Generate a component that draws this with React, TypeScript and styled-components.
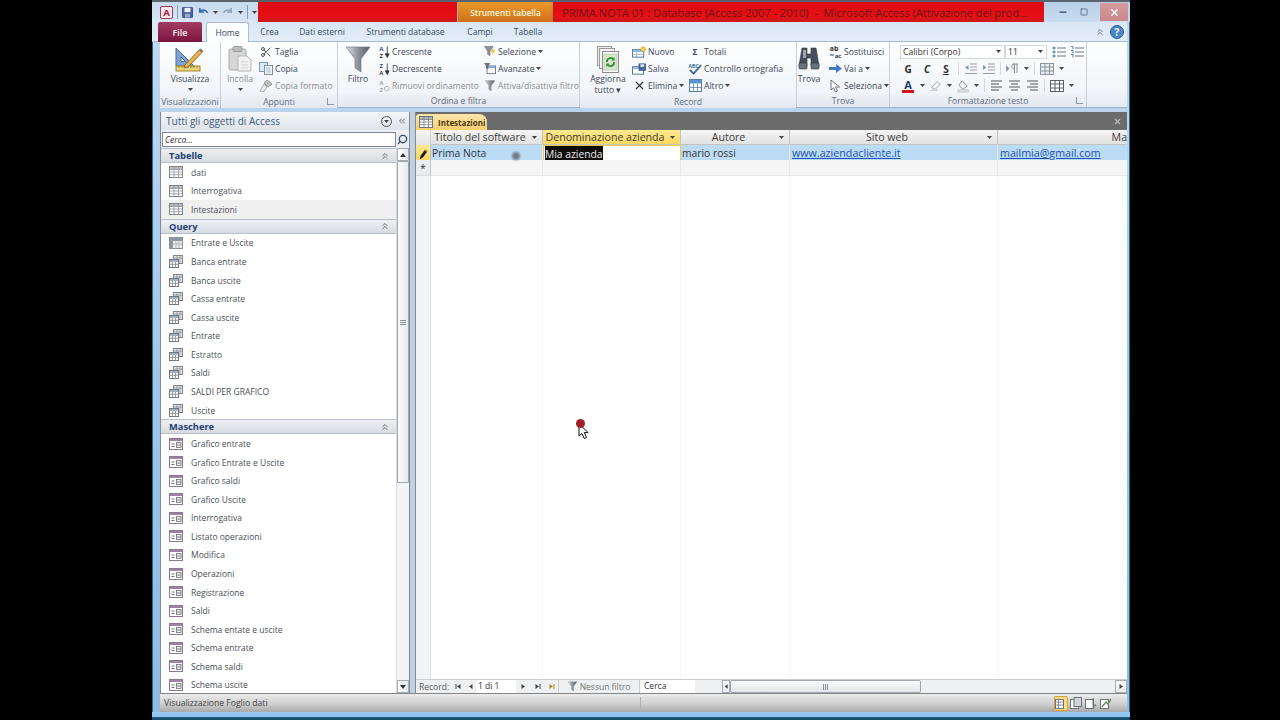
import React from 'react';
import styled, { createGlobalStyle } from 'styled-components';
import { Scissors, X, ChevronsUp, ChevronsLeft, Search, Minus, Square } from 'lucide-react';

const UI_FONT = '"Open Sans", "Noto Sans", "Liberation Sans", sans-serif';

const GlobalStyle = createGlobalStyle`
    html, body {
        margin: 0;
        height: 100%;
        background: #000;
        overflow: hidden;
    }
    * {
        box-sizing: border-box;
    }
`;

const TABLES = ['dati', 'Interrogativa', 'Intestazioni'];
const QUERIES = [
    'Entrate e Uscite',
    'Banca entrate',
    'Banca uscite',
    'Cassa entrate',
    'Cassa uscite',
    'Entrate',
    'Estratto',
    'Saldi',
    'SALDI PER GRAFICO',
    'Uscite',
];
const FORMS = [
    'Grafico entrate',
    'Grafico Entrate e Uscite',
    'Grafico saldi',
    'Grafico Uscite',
    'Interrogativa',
    'Listato operazioni',
    'Modifica',
    'Operazioni',
    'Registrazione',
    'Saldi',
    'Schema entate e uscite',
    'Schema entrate',
    'Schema saldi',
    'Schema uscite',
];
const COLUMNS = '15px 112px 138px 109px 208px 262px';

/* icons */
const TableIcon = () => (
    <svg width="14" height="12" viewBox="0 0 14 12">
        <rect x="0.5" y="0.5" width="13" height="11" fill="#fff" stroke="#6f7378" />
        <rect x="1" y="1" width="12" height="2.5" fill="#aeb4bc" />
        <path d="M0.5 3.5H13.5M0.5 6H13.5M0.5 8.7H13.5M5 1V11M9.5 1V11" stroke="#7d8288" strokeWidth="0.8" />
    </svg>
);
const QueryIcon = () => (
    <svg width="14" height="13" viewBox="0 0 14 13">
        <rect x="4.5" y="0.5" width="9" height="8" fill="#dfe3e8" stroke="#6b7077" />
        <path d="M4.5 3H13.5M8 1V8M11 1V8" stroke="#6b7077" strokeWidth="0.7" />
        <rect x="0.5" y="4.5" width="9" height="8" fill="#fff" stroke="#5b6066" />
        <rect x="1" y="5" width="8" height="2" fill="#8fa6b8" />
        <path d="M0.5 9.3H9.5M3.5 7V12.5M6.5 7V12.5" stroke="#5b6066" strokeWidth="0.7" />
    </svg>
);
const CrossIcon = () => (
    <svg width="14" height="12" viewBox="0 0 14 12">
        <rect x="0.5" y="0.5" width="13" height="11" fill="#e6e8ec" stroke="#777c83" />
        <rect x="1" y="1" width="12" height="3" fill="#7d858f" />
        <rect x="1" y="1" width="3" height="10" fill="#7d858f" />
        <path d="M7 4V11M10 4V11M4 7H13" stroke="#9a9fa6" strokeWidth="0.8" />
    </svg>
);
const FormIcon = () => (
    <svg width="14" height="12" viewBox="0 0 14 12">
        <rect x="0.5" y="0.5" width="13" height="11" fill="#fff" stroke="#7a5f80" />
        <rect x="1" y="1" width="12" height="2" fill="#8f6f97" />
        <path d="M2.5 6H5.5M2.5 8.5H5.5" stroke="#57585c" />
        <rect x="7.5" y="4.5" width="4.5" height="5" fill="#e7e7ea" stroke="#57585c" strokeWidth="0.8" />
        <path d="M7.5 7H12" stroke="#57585c" strokeWidth="0.8" />
    </svg>
);
const AccessLogo = () => (
    <svg width="13" height="13" viewBox="0 0 15 15">
        <rect x="0.5" y="0.5" width="14" height="14" rx="2" fill="#f7e6ea" stroke="#8c1538" />
        <text x="7.5" y="12" textAnchor="middle" fontSize="11" fontWeight="700" fontFamily={UI_FONT} fill="#a01a42">
            A
        </text>
    </svg>
);
const SaveIcon = () => (
    <svg width="11" height="11" viewBox="0 0 13 13">
        <rect x="0.5" y="0.5" width="12" height="12" rx="1" fill="#4a66a0" stroke="#2f4575" />
        <rect x="3" y="1" width="7" height="5" fill="#eef3fa" />
        <rect x="3.5" y="8" width="6" height="4.5" fill="#9aa9c4" />
    </svg>
);
const UndoIcon = ({ $muted }: { $muted?: boolean }) => (
    <svg width="12" height="10" viewBox="0 0 13 11" style={$muted ? { transform: 'scaleX(-1)' } : undefined}>
        <path
            d="M3 1V5.5H7.5M3.2 5.2C5 2.6 9.5 2.5 11.5 6.5"
            fill="none"
            stroke={$muted ? '#8fa3b6' : '#2f64a8'}
            strokeWidth="1.7"
        />
    </svg>
);
const Caret = () => (
    <svg width="5" height="3" viewBox="0 0 5 3">
        <path d="M0 0H5L2.5 3Z" fill="#444" />
    </svg>
);
const VisualizzaIcon = () => (
    <svg width="32" height="26" viewBox="0 0 32 26">
        <path d="M2 2L2 20H20Z" fill="#7fa3cf" stroke="#4a6a96" />
        <path d="M7 11L7 15.5H11.5Z" fill="#fff" stroke="#4a6a96" />
        <rect x="2" y="20" width="24" height="5" fill="#ecd277" stroke="#a28a35" />
        <path d="M5 20V22M8 20V22M11 20V22M14 20V22M17 20V22M20 20V22M23 20V22" stroke="#7f6a22" strokeWidth="0.7" />
        <path d="M11 19L25 4L28 6.5L14 21L10 22Z" fill="#e9b44f" stroke="#7f5f1d" strokeWidth="0.8" />
        <path d="M25 4L26.5 2.5L29.5 5L28 6.5Z" fill="#7a7a7a" />
    </svg>
);
const PasteIcon = () => (
    <svg width="24" height="26" viewBox="0 0 24 26">
        <rect x="1" y="3" width="17" height="21" rx="1.5" fill="#d6d6d6" stroke="#a9a9a9" />
        <rect x="5" y="0.5" width="9" height="5" rx="1" fill="#bfbfbf" stroke="#9c9c9c" />
        <path d="M10 10H19L23 14V25H10Z" fill="#f2f2f2" stroke="#b5b5b5" />
        <path d="M12.5 16H20M12.5 19H20M12.5 22H20" stroke="#d0d0d0" />
    </svg>
);
const CopyIcon = () => (
    <svg width="14" height="13" viewBox="0 0 14 13">
        <rect x="0.5" y="0.5" width="8" height="9" fill="#dce8f5" stroke="#7d99b8" />
        <rect x="5.5" y="3.5" width="8" height="9" fill="#fff" stroke="#7d8fa5" />
        <path d="M7 6H12M7 8H12M7 10H12" stroke="#7fa0c2" strokeWidth="0.8" />
    </svg>
);
const BrushIcon = () => (
    <svg width="14" height="13" viewBox="0 0 14 13">
        <path d="M8 1L13 5L9 8L5 4Z" fill="#c3c3c3" stroke="#8a8a8a" strokeWidth="0.8" />
        <path d="M5 5L8 8L5 12.5L1 12Z" fill="#ececec" stroke="#999" strokeWidth="0.8" />
    </svg>
);
const FunnelIcon = ({ $size = 24 }: { $size?: number }) => (
    <svg width={$size} height={$size + 4} viewBox="0 0 24 28">
        <defs>
            <linearGradient id="fn" x1="0" x2="1" y1="0" y2="0">
                <stop offset="0" stopColor="#dfe2e6" />
                <stop offset="0.5" stopColor="#8d949c" />
                <stop offset="1" stopColor="#596069" />
            </linearGradient>
        </defs>
        <path d="M0 1H24L15 13V26L9 22V13Z" fill="url(#fn)" stroke="#6b7178" strokeWidth="0.6" />
    </svg>
);
const SortIcon = ({ $top, $bottom, $muted }: { $top: string; $bottom: string; $muted?: boolean }) => (
    <svg width="13" height="14" viewBox="0 0 13 14">
        <text x="3.5" y="6" textAnchor="middle" fontSize="6.5" fontWeight="700" fontFamily={UI_FONT} fill={$muted ? '#a5a5a5' : '#2f4f78'}>
            {$top}
        </text>
        <text x="3.5" y="13" textAnchor="middle" fontSize="6.5" fontWeight="700" fontFamily={UI_FONT} fill={$muted ? '#a5a5a5' : '#444'}>
            {$bottom}
        </text>
        {$muted ? (
            <path d="M7 9C9 6 12 8 12 10C12 12 9 13 7 11Z" fill="none" stroke="#a5a5a5" />
        ) : (
            <path d="M10 1V11M8 9L10 13L12 9Z" fill="#333" stroke="#333" strokeWidth="0.9" />
        )}
    </svg>
);
const SelectionIcon = () => (
    <svg width="13" height="13" viewBox="0 0 13 13">
        <path d="M0.5 1H10L6.5 6V11L4 9.5V6Z" fill="#8b9198" stroke="#5f656c" strokeWidth="0.6" />
        <path d="M9 3L12 6L8 12L10 7.5L7.5 7Z" fill="#f0c33c" />
    </svg>
);
const AdvancedIcon = () => (
    <svg width="14" height="13" viewBox="0 0 14 13">
        <rect x="3.5" y="3.5" width="10" height="9" fill="#fff" stroke="#63708a" />
        <rect x="4" y="4" width="9" height="2" fill="#7fa5d4" />
        <path d="M0.5 0.5H7L4.7 3.5V7L2.8 6V3.5Z" fill="#6c7279" stroke="#4f555c" strokeWidth="0.5" />
    </svg>
);
const RefreshIcon = () => (
    <svg width="24" height="27" viewBox="0 0 24 27">
        <rect x="1.5" y="0.5" width="14" height="19" fill="#eee" stroke="#9a9a9a" />
        <rect x="3.5" y="2.5" width="15" height="20" fill="#f5f5f5" stroke="#9a9a9a" />
        <rect x="6.5" y="5.5" width="16" height="21" fill="#fff" stroke="#8a8a8a" />
        <rect x="8" y="8" width="13" height="16" fill="#d5e7cb" stroke="#a9bd9c" strokeWidth="0.6" />
        <path d="M11 16A3.6 3.6 0 0 1 17.5 13.5M18 16A3.6 3.6 0 0 1 11.5 18.6" fill="none" stroke="#2f8a2f" strokeWidth="1.7" />
        <path d="M18.6 11V14.5H15.4ZM10.4 21V17.6H13.6Z" fill="#2f8a2f" />
    </svg>
);
const NewIcon = () => (
    <svg width="15" height="12" viewBox="0 0 15 12">
        <rect x="0.5" y="3.5" width="12" height="8" fill="#fff" stroke="#53729c" />
        <rect x="1" y="4" width="11" height="2" fill="#8fb3dd" />
        <path d="M0.5 8.5H12.5M5 6V11.5" stroke="#7c98bb" strokeWidth="0.7" />
        <circle cx="12" cy="3" r="2.6" fill="#f6d45a" stroke="#b4922a" strokeWidth="0.6" />
    </svg>
);
const SaveRowIcon = () => (
    <svg width="15" height="12" viewBox="0 0 15 12">
        <rect x="0.5" y="3.5" width="12" height="8" fill="#fff" stroke="#53729c" />
        <rect x="1" y="4" width="11" height="2" fill="#8fb3dd" />
        <rect x="7.5" y="0.5" width="7" height="7" fill="#4668a5" stroke="#2e4676" strokeWidth="0.7" />
        <rect x="9" y="1" width="4" height="2.6" fill="#e9eff8" />
    </svg>
);
const SpellIcon = () => (
    <svg width="15" height="13" viewBox="0 0 15 13">
        <text x="6" y="5.5" textAnchor="middle" fontSize="5.5" fontWeight="700" fontFamily={UI_FONT} fill="#3a6aa5">
            ABC
        </text>
        <path d="M2 8L6 12L14 3" fill="none" stroke="#3f6a9a" strokeWidth="2" />
    </svg>
);
const MoreIcon = () => (
    <svg width="13" height="13" viewBox="0 0 13 13">
        <rect x="0.5" y="0.5" width="12" height="12" fill="#fff" stroke="#5a7da8" />
        <rect x="1" y="1" width="11" height="3.5" fill="#5c93d3" />
        <path d="M0.5 8.5H12.5M4.5 4.5V12.5M8.5 4.5V12.5" stroke="#5a7da8" strokeWidth="0.8" />
    </svg>
);
const BinocularsIcon = () => (
    <svg width="22" height="24" viewBox="0 0 22 24">
        <path d="M4 2H9V8H13V2H18L21 20H13V12H9V20H1Z" fill="#45505c" stroke="#2b333c" strokeWidth="0.6" />
        <rect x="1" y="17" width="8" height="6" rx="1" fill="#67727e" stroke="#2b333c" strokeWidth="0.6" />
        <rect x="13" y="17" width="8" height="6" rx="1" fill="#67727e" stroke="#2b333c" strokeWidth="0.6" />
        <rect x="5" y="4" width="3" height="8" fill="#9ba6b1" />
    </svg>
);
const ReplaceIcon = () => (
    <svg width="13" height="14" viewBox="0 0 13 14">
        <text x="5" y="6" textAnchor="middle" fontSize="7" fontFamily={UI_FONT} fontWeight="700" fill="#333">
            ab
        </text>
        <text x="9" y="13" textAnchor="middle" fontSize="6" fontFamily={UI_FONT} fontWeight="700" fill="#333">
            ac
        </text>
        <path d="M1 10H5" stroke="#3f72b5" strokeWidth="1.3" />
    </svg>
);
const GotoIcon = () => (
    <svg width="13" height="9" viewBox="0 0 13 9">
        <path d="M0 3H7V0L13 4.5L7 9V6H0Z" fill="#3f7cc8" />
    </svg>
);
const PointerIcon = () => (
    <svg width="11" height="14" viewBox="0 0 11 14">
        <path d="M1 1V11L3.6 8.8L5.5 13L7.5 12L5.6 8H9.5Z" fill="#fff" stroke="#6c7078" />
    </svg>
);
const HelpIcon = () => (
    <svg width="14" height="14" viewBox="0 0 14 14">
        <circle cx="7" cy="7" r="6.5" fill="#4a86c8" stroke="#2f5f97" />
        <text x="7" y="10.7" textAnchor="middle" fontSize="10" fontWeight="700" fontFamily={UI_FONT} fill="#fff">
            ?
        </text>
    </svg>
);
const ListIcon = ({ $numbered }: { $numbered?: boolean }) => (
    <svg width="14" height="12" viewBox="0 0 14 12">
        <path d="M5 2H14M5 6H14M5 10H14" stroke="#6f7780" />
        <path
            d={$numbered ? 'M1 0.5H3V3.5M1 4.5H3V7.5M1 8.5H3V11.5' : 'M1 1.2H3V2.8H1ZM1 5.2H3V6.8H1ZM1 9.2H3V10.8H1Z'}
            fill="none"
            stroke="#5880ad"
        />
    </svg>
);
const IndentIcon = ({ $out }: { $out?: boolean }) => (
    <svg width="13" height="12" viewBox="0 0 13 12">
        <path d="M6 1H13M6 4H13M6 7H13M1 10.5H13" stroke="#9aa0a7" />
        <path d={$out ? 'M4.5 2V7L1 4.5Z' : 'M1 2V7L4.5 4.5Z'} fill="#7f9ab8" />
    </svg>
);
const RtlIcon = () => (
    <svg width="13" height="11" viewBox="0 0 13 11">
        <path d="M0 2V9L3.5 5.5Z" fill="#7f9ab8" />
        <path d="M7 1H12M8 1C5 1 5 6 8 6M8.5 1V10M11 1V10" fill="none" stroke="#8a8f95" />
    </svg>
);
const GridIcon = ({ $light }: { $light?: boolean }) => (
    <svg width="14" height="12" viewBox="0 0 14 12">
        <rect x="0.5" y="0.5" width="13" height="11" fill={$light ? '#e8edf3' : '#fff'} stroke={$light ? '#8c96a1' : '#5c6268'} />
        <path d="M0.5 4H13.5M0.5 8H13.5M5 0.5V11.5M9.5 0.5V11.5" stroke={$light ? '#8c96a1' : '#5c6268'} />
    </svg>
);
const FontColorIcon = () => (
    <svg width="14" height="14" viewBox="0 0 14 14">
        <text x="7" y="10" textAnchor="middle" fontSize="11" fontWeight="700" fontFamily={UI_FONT} fill="#1c3f70">
            A
        </text>
        <rect x="1" y="11" width="12" height="3" fill="#d01818" />
    </svg>
);
const HighlightIcon = () => (
    <svg width="12" height="13" viewBox="0 0 14 13">
        <path d="M2 9L8 2L12 5L6 11Z" fill="none" stroke="#9aa1a9" />
        <path d="M1 12H9" stroke="#c4c8cc" strokeWidth="1.5" />
    </svg>
);
const FillIcon = () => (
    <svg width="12" height="14" viewBox="0 0 14 14">
        <path d="M6 1L12 7L7 11L2 6Z" fill="#f1f1f1" stroke="#7a8088" />
        <rect x="1" y="11.5" width="12" height="2.5" fill="#e2e2e2" stroke="#9a9a9a" strokeWidth="0.5" />
    </svg>
);
const AlignIcon = ({ $mode }: { $mode: 'left' | 'center' | 'right' }) => (
    <svg width="13" height="11" viewBox="0 0 13 11">
        {$mode === 'left' && <path d="M1 1H12M1 4H9M1 7H12M1 10H9" stroke="#555" />}
        {$mode === 'center' && <path d="M1 1H12M3 4H10M1 7H12M3 10H10" stroke="#555" />}
        {$mode === 'right' && <path d="M1 1H12M4 4H12M1 7H12M4 10H12" stroke="#555" />}
    </svg>
);
const ArrowGlyph = ({ $dir, $bar, $color = '#444' }: { $dir: 'left' | 'right'; $bar?: boolean; $color?: string }) => (
    <svg width="7" height="7" viewBox="0 0 7 7">
        <path d={$dir === 'left' ? 'M5.5 1V6L2 3.5Z' : 'M1.5 1V6L5 3.5Z'} fill={$color} />
        {$bar && <path d={$dir === 'left' ? 'M1 1V6' : 'M6 1V6'} stroke={$color} />}
    </svg>
);
const ViewIcon = ({ $kind }: { $kind: number }) => (
    <svg width="12" height="12" viewBox="0 0 12 12">
        <rect x="0.5" y="2.5" width="8" height="9" fill="#fff" stroke="#6d7278" />
        {$kind === 0 && <path d="M0.5 5H8.5M0.5 8H8.5M3.5 2.5V11.5" stroke="#6d7278" strokeWidth="0.8" />}
        {$kind === 1 && <rect x="4" y="0.5" width="7.5" height="9" fill="#cfd4da" stroke="#6d7278" />}
        {$kind === 2 && <path d="M8 1V8H11L8 11Z" fill="#7a8aa0" stroke="#6d7278" strokeWidth="0.7" />}
        {$kind === 3 && <path d="M2 10L6 5L8 7L11 2" fill="none" stroke="#6a8a6a" strokeWidth="1.4" />}
    </svg>
);
const PencilIcon = () => (
    <svg width="9" height="11" viewBox="0 0 9 11">
        <path d="M1 10L2 6.5L6 1L8 2.5L4 8Z" fill="#1a1a1a" stroke="#222" strokeWidth="0.5" />
        <path d="M6 1L8 2.5" stroke="#c98c1a" strokeWidth="1.2" />
    </svg>
);
const MouseCursor = () => (
    <svg width="12" height="17" viewBox="0 0 12 17">
        <path d="M1 1V13L4 10.5L6.2 15.5L8.5 14.5L6.3 9.6H10.2Z" fill="#fff" stroke="#111" />
    </svg>
);

/* page */
const Page = styled.div`
    width: 1280px;
    height: 720px;
    padding-left: 152px;
    background: #000;
    font-family: ${UI_FONT};
    position: relative;
`;

const Window = styled.div`
    width: 978px;
    height: 720px;
    display: flex;
    flex-direction: column;
    background: linear-gradient(#c4d9ee, #9cc4e8 60%, #8fbbe4);
    box-shadow: inset 1px 0 #2a6a8c, inset -1px 0 #2a6a8c;
`;

const TitleBar = styled.div`
    height: 22px;
    display: flex;
    border-top: 2px solid #59636d;
    flex-shrink: 0;
`;

const QuickAccess = styled.div`
    width: 106px;
    display: flex;
    align-items: center;
    gap: 4px;
    padding-left: 8px;
    background: linear-gradient(#c5d9ee, #d8e6f5);
`;

const QuickSep = styled.span`
    width: 1px;
    height: 14px;
    background: #8d9fb3;
`;

const RedStrip = styled.div<{ $w: number }>`
    width: ${(p) => p.$w}px;
    background: linear-gradient(#dd0a10, #e61014 70%, #cc1a1e);
`;

const ContextTitle = styled.div`
    width: 96px;
    display: flex;
    align-items: center;
    justify-content: center;
    font-size: 8.4px;
    font-weight: 600;
    color: #fff6dc;
    background: linear-gradient(#e99a2a, #d0701d);
    border-left: 1px solid #caa;
`;

const WindowTitle = styled.div`
    width: 491px;
    display: flex;
    align-items: center;
    padding-left: 9px;
    font-size: 11.3px;
    letter-spacing: -0.1px;
    color: #6e1418;
    white-space: pre;
    background: linear-gradient(#dd0a10, #e61014 70%, #cc1a1e);
    box-shadow: 0 1px 2px #5a7da0;
`;

const WindowControls = styled.div`
    flex: 1;
    display: flex;
    align-items: center;
    justify-content: flex-end;
    gap: 12px;
    padding-right: 2px;
    color: #3d4a58;
    background: linear-gradient(#b7d0e8, #c9dcf0);
`;

const CloseBtn = styled.div`
    width: 28px;
    height: 18px;
    display: flex;
    align-items: center;
    justify-content: center;
    background: linear-gradient(#d69a9f, #c9888e);
    color: #fff;
`;

const TabRow = styled.div`
    height: 20px;
    display: flex;
    align-items: stretch;
    padding-left: 6px;
    margin-right: 3px;
    flex-shrink: 0;
    background: linear-gradient(#d9e6f4, #e3edf8);
    border-bottom: 1px solid #a9bbd0;
`;

const FileTab = styled.div`
    width: 44px;
    margin-right: 4px;
    display: flex;
    align-items: center;
    justify-content: center;
    margin-bottom: -1px;
    font-size: 9px;
    font-weight: 600;
    color: #fbeef2;
    background: linear-gradient(#a33a62, #7b1640);
    border-radius: 2px 2px 0 0;
`;

const RibbonTab = styled.div<{ $w: number; $active?: boolean }>`
    width: ${(p) => p.$w}px;
    display: flex;
    align-items: center;
    justify-content: center;
    font-size: 8.5px;
    color: #384a60;
    ${(p) =>
        p.$active &&
        `
        background: #fdfeff;
        border: 1px solid #a9bbd0;
        border-bottom: none;
        border-radius: 3px 3px 0 0;
        margin-bottom: -1px;
    `}
`;

const RightIcons = styled.div`
    margin-left: auto;
    display: flex;
    align-items: center;
    gap: 5px;
    padding-right: 3px;
    color: #55606b;
`;

const Ribbon = styled.div`
    height: 66px;
    margin: 0 3px 0 8px;
    display: flex;
    flex-shrink: 0;
    background: linear-gradient(#fdfefe, #f2f5f9 75%, #e4eaf2);
    border-bottom: 1px solid #9bb0c6;
`;

const Group = styled.div<{ $w: number }>`
    width: ${(p) => p.$w}px;
    display: flex;
    flex-direction: column;
    flex-shrink: 0;
    border-right: 1px solid #c6ced8;
`;

const GroupBody = styled.div`
    flex: 1;
    display: flex;
    padding: 1px 0 0 0;
`;

const GroupLabel = styled.div`
    height: 14px;
    padding-top: 1px;
    position: relative;
    display: flex;
    align-items: center;
    justify-content: center;
    font-size: 8.6px;
    color: #5d6a78;
    background: linear-gradient(#eef2f6, #e3e8ef);
`;

const Launcher = styled.span`
    position: absolute;
    right: 3px;
    bottom: 3px;
    width: 7px;
    height: 7px;
    border-left: 1px solid #8b97a5;
    border-bottom: 1px solid #8b97a5;
`;

const BigButton = styled.div<{ $w: number; $muted?: boolean; $ml?: number }>`
    width: ${(p) => p.$w}px;
    margin-left: ${(p) => p.$ml ?? 0}px;
    display: flex;
    flex-direction: column;
    align-items: center;
    flex-shrink: 0;
    padding-top: 3px;
    font-size: 8.6px;
    line-height: 10.5px;
    white-space: nowrap;
    text-align: center;
    color: ${(p) => (p.$muted ? '#8d8d8d' : '#3c4654')};
`;

const BigIcon = styled.div<{ $h: number }>`
    height: ${(p) => p.$h}px;
    display: flex;
    align-items: flex-start;
    justify-content: center;
`;

const CaretLine = styled.div`
    height: 10px;
    display: flex;
    align-items: center;
    justify-content: center;
`;

const ToolColumn = styled.div<{ $w?: number; $ml?: number }>`
    width: ${(p) => (p.$w ? `${p.$w}px` : 'auto')};
    margin-left: ${(p) => p.$ml ?? 0}px;
    display: flex;
    flex-direction: column;
    flex-shrink: 0;
`;

const Tool = styled.div<{ $muted?: boolean }>`
    height: 17px;
    display: flex;
    align-items: center;
    gap: 2px;
    font-size: 8.6px;
    white-space: nowrap;
    color: ${(p) => (p.$muted ? '#8d8d8d' : '#3c4654')};
`;

const ToolIcon = styled.span<{ $w: number }>`
    width: ${(p) => p.$w}px;
    display: flex;
    justify-content: center;
    flex-shrink: 0;
`;

const Format = styled.div`
    padding: 0 0 0 11px;
    display: flex;
    flex-direction: column;
`;

const FormatRow = styled.div`
    height: 17px;
    display: flex;
    align-items: center;
    gap: 5px;
`;

const FirstFormatRow = styled(FormatRow)`
    gap: 4px;
    margin-left: -1px;
`;

const ComboBox = styled.div<{ $w: number }>`
    width: ${(p) => p.$w}px;
    height: 14px;
    padding: 0 3px 0 2px;
    display: flex;
    align-items: center;
    justify-content: space-between;
    font-size: 8.6px;
    color: #333;
    background: #fff;
    border: 1px solid #d3d9e0;
`;

const ComboGroup = styled.div`
    display: flex;
    margin-right: 1px;
`;

const StyleLetter = styled.span<{ $italic?: boolean; $under?: boolean }>`
    width: 14px;
    text-align: center;
    font-size: 10px;
    font-weight: 700;
    color: #2e2e2e;
    font-style: ${(p) => (p.$italic ? 'italic' : 'normal')};
    text-decoration: ${(p) => (p.$under ? 'underline' : 'none')};
`;

const RibbonSep = styled.span`
    width: 1px;
    height: 13px;
    background: #d4d9df;
`;

const Body = styled.div`
    flex: 1;
    min-height: 0;
    margin: 4px 3px 0 8px;
    display: flex;
`;

const NavPane = styled.div`
    width: 250px;
    display: flex;
    flex-direction: column;
    flex-shrink: 0;
    background: #fff;
    border: 1px solid #7f8b98;
    border-top: none;
    border-bottom: none;
`;

const NavHeader = styled.div`
    height: 18px;
    display: flex;
    align-items: center;
    padding: 0 2px 0 5px;
    font-size: 10px;
    color: #3f5a7a;
    background: linear-gradient(#f4f6f8, #dfe4ea);
    flex-shrink: 0;
`;

const NavTitle = styled.span`
    flex: 1;
`;

const MenuCircle = styled.span`
    width: 11px;
    height: 11px;
    margin-right: 5px;
    display: flex;
    align-items: center;
    justify-content: center;
    border: 1px solid #4d5864;
    border-radius: 50%;
`;

const SearchRow = styled.div`
    height: 18px;
    display: flex;
    align-items: center;
    padding: 1px 0 1px 1px;
    background: #eceff3;
    flex-shrink: 0;
`;

const SearchInput = styled.div`
    flex: 1;
    height: 15px;
    padding-left: 2px;
    font-size: 8.5px;
    line-height: 13px;
    font-style: italic;
    color: #333;
    background: #fff;
    border: 1px solid #7d8893;
`;

const SearchBtn = styled.span`
    width: 13px;
    display: flex;
    justify-content: center;
    color: #38506e;
`;

const NavBody = styled.div`
    flex: 1;
    min-height: 0;
    display: flex;
`;

const NavList = styled.div`
    flex: 1;
    min-width: 0;
    overflow: hidden;
`;

const GroupHead = styled.div`
    height: 15px;
    display: flex;
    align-items: center;
    justify-content: space-between;
    padding: 0 6px 0 8px;
    font-size: 9.3px;
    font-weight: 700;
    color: #1f3f78;
    background: linear-gradient(#eef0f3, #d7dbe0);
    border-top: 1px solid #b9bfc6;
    border-bottom: 1px solid #b9bfc6;
`;

const NavItem = styled.div<{ $selected?: boolean }>`
    height: 18.57px;
    display: flex;
    align-items: center;
    padding-left: 8px;
    gap: 8px;
    font-size: 8.5px;
    color: #4a4f56;
    white-space: nowrap;
    background: ${(p) => (p.$selected ? '#f0f0f0' : '#fff')};

    svg {
        opacity: 0.85;
    }
`;

const VScroll = styled.div`
    width: 13px;
    display: flex;
    flex-direction: column;
    align-items: stretch;
    background: #f1f3f5;
    border-left: 1px solid #d9dde1;
    flex-shrink: 0;
`;

const ScrollBtn = styled.div`
    height: 13px;
    display: flex;
    align-items: center;
    justify-content: center;
    background: linear-gradient(90deg, #fff, #e5e8ec);
    border: 1px solid #a6adb5;
    flex-shrink: 0;
`;

const ScrollArrow = styled.span<{ $down?: boolean }>`
    width: 0;
    height: 0;
    border-left: 3.5px solid transparent;
    border-right: 3.5px solid transparent;
    border-${(p) => (p.$down ? 'top' : 'bottom')}: 4px solid #333;
`;

const VThumb = styled.div`
    height: 322px;
    display: flex;
    align-items: center;
    justify-content: center;
    background: linear-gradient(90deg, #fbfcfd, #e6e9ed);
    border: 1px solid #9fa6ae;
    border-radius: 1px;
    flex-shrink: 0;
`;

const Grip = styled.span`
    width: 6px;
    height: 5px;
    border-top: 1px solid #8a9096;
    border-bottom: 1px solid #8a9096;
    background: linear-gradient(#8a9096, #8a9096) center / 100% 1px no-repeat;
`;

const ScrollGap = styled.div`
    flex: 1;
`;

const Splitter = styled.div`
    width: 5px;
    flex-shrink: 0;
    background: #c3d0de;
`;

const Doc = styled.div`
    flex: 1;
    min-width: 0;
    display: flex;
    flex-direction: column;
    background: #fff;
    border-left: 1px solid #7f8b98;
`;

const DocTabs = styled.div`
    height: 18px;
    display: flex;
    align-items: flex-end;
    justify-content: space-between;
    padding-right: 5px;
    background: #6b6b6b;
    flex-shrink: 0;
`;

const DocTab = styled.div`
    width: 71px;
    height: 16px;
    padding-left: 3px;
    display: flex;
    align-items: center;
    gap: 5px;
    font-size: 8px;
    font-weight: 700;
    color: #4a3a12;
    background: linear-gradient(#fbe6ac, #f8cf70);
    border-radius: 3px 8px 0 0;
`;

const DocClose = styled.span`
    align-self: center;
    display: flex;
    color: #bdbdbd;
`;

const GridRow = styled.div<{ $h: number }>`
    height: ${(p) => p.$h}px;
    display: grid;
    grid-template-columns: ${COLUMNS};
    overflow: hidden;
    flex-shrink: 0;
`;

const Corner = styled.div`
    background: linear-gradient(#f6f6f6, #e4e4e4);
    border-right: 1px solid #d0d0d0;
`;

const HeadCell = styled.div<{ $active?: boolean }>`
    position: relative;
    display: flex;
    align-items: center;
    justify-content: center;
    padding: 0 13px 0 0;
    font-size: 10.6px;
    color: #3a3a3a;
    white-space: nowrap;
    border-right: 1px solid #c4c4c4;
    border-bottom: 1px solid #c4c4c4;
    background: ${(p) => (p.$active ? 'linear-gradient(#fde992, #fbd75f)' : 'linear-gradient(#f4f4f4, #e2e2e2)')};
`;

const HeadCaret = styled.span`
    position: absolute;
    right: 5px;
    top: 6px;
    display: flex;
`;

const RowSelector = styled.div<{ $current?: boolean }>`
    display: flex;
    align-items: center;
    justify-content: center;
    font-size: 10px;
    color: #333;
    border-right: 1px solid #c4c4c4;
    border-bottom: 1px solid #dcdcdc;
    background: ${(p) => (p.$current ? 'linear-gradient(#fde992, #f9d25b)' : '#e9edf1')};
`;

const Cell = styled.div<{ $filled?: boolean; $link?: boolean; $pad?: number }>`
    display: flex;
    align-items: center;
    padding: 0 0 2px ${(p) => p.$pad ?? 1}px;
    font-size: ${(p) => (p.$link ? 10.7 : 10.3)}px;
    white-space: nowrap;
    color: ${(p) => (p.$link ? '#1d4fb0' : '#333')};
    text-decoration: ${(p) => (p.$link ? 'underline' : 'none')};
    background: ${(p) => (p.$filled ? '#bcdcf6' : '#f5f5f5')};
    border-right: 1px solid #e8e8e8;
    border-bottom: 1px solid #e8e8e8;
`;

const EditCell = styled.div`
    display: flex;
    align-items: center;
    padding: 0 0 1px 1px;
    font-size: 10.3px;
    background: #fff;
    border: 1px solid #f0c850;
`;

const SelectedText = styled.span`
    color: #eee;
    background: #0c0c0c;
    padding: 1px 0;
`;

const EmptyGrid = styled.div`
    flex: 1;
    min-height: 0;
    display: grid;
    grid-template-columns: ${COLUMNS};
    overflow: hidden;
`;

const EmptySelector = styled.div`
    background: #f2f4f7;
    border-right: 1px solid #dfe2e6;
`;

const EmptyCol = styled.div`
    border-right: 1px solid #f6f6f6;
`;

const RecordBar = styled.div`
    height: 14px;
    display: flex;
    align-items: center;
    font-size: 8.5px;
    color: #555;
    background: #eef0f2;
    border-top: 1px solid #c9ccd0;
    flex-shrink: 0;
`;

const RecLabel = styled.span`
    width: 36px;
    padding-left: 3px;
`;

const RecNav = styled.span<{ $w: number }>`
    width: ${(p) => p.$w}px;
    display: flex;
    align-items: center;
    justify-content: space-around;
    flex-shrink: 0;
`;

const RecInput = styled.span`
    width: 40px;
    height: 13px;
    padding-left: 2px;
    line-height: 12px;
    color: #333;
    background: #fff;
`;

const FilterLabel = styled.span`
    width: 82px;
    display: flex;
    align-items: center;
    justify-content: center;
    gap: 3px;
    color: #757575;
    border-left: 1px solid #c9ccd0;
    border-right: 1px solid #c9ccd0;
`;

const SearchBox = styled.span`
    width: 54px;
    height: 13px;
    margin-left: 1px;
    padding-left: 3px;
    line-height: 12px;
    color: #333;
    background: #fff;
`;

const HScroll = styled.div`
    flex: 1;
    min-width: 0;
    margin-left: 27px;
    display: flex;
    align-items: stretch;
    height: 13px;
`;

const HBtn = styled.div<{ $w: number }>`
    width: ${(p) => p.$w}px;
    display: flex;
    align-items: center;
    justify-content: center;
    flex-shrink: 0;
    background: linear-gradient(#fbfbfb, #e7e9ec);
    border: 1px solid #a9aeb4;
`;

const HThumb = styled.div`
    width: 191px;
    display: flex;
    align-items: center;
    justify-content: center;
    background: linear-gradient(#f8f9fa, #e3e5e8);
    border: 1px solid #9fa6ae;
    border-radius: 2px;
    flex-shrink: 0;
`;

const HGrip = styled.span`
    width: 5px;
    height: 6px;
    border-left: 1px solid #8a9096;
    border-right: 1px solid #8a9096;
    background: linear-gradient(#8a9096, #8a9096) center / 1px 100% no-repeat;
`;

const StatusBar = styled.div`
    height: 19px;
    margin: 0 3px 0 8px;
    display: flex;
    align-items: center;
    flex-shrink: 0;
    background: linear-gradient(#ececec, #cfcfcf 55%, #a9a9a9);
    border-top: 1px solid #858585;
`;

const StatusText = styled.div`
    width: 481px;
    padding-left: 4px;
    font-size: 8.6px;
    color: #444;
    border-right: 1px solid #aab0b6;
`;

const ViewIcons = styled.div`
    margin-left: auto;
    display: flex;
    align-items: center;
    gap: 1px;
    padding-right: 14px;
`;

const ViewBtn = styled.span<{ $active?: boolean }>`
    width: 14px;
    height: 15px;
    display: flex;
    align-items: center;
    justify-content: center;
    border-radius: 2px;
    ${(p) => p.$active && 'background: #fbdc8a; border: 1px solid #d6a12e;'}
`;

const BottomEdge = styled.div`
    height: 8px;
    flex-shrink: 0;
    background: linear-gradient(#93c6ef 0, #93c6ef 5px, #1d5b7d 5px, #164a68);
`;

const ClickDot = styled.span`
    position: absolute;
    left: 512px;
    top: 152px;
    width: 8px;
    height: 8px;
    border-radius: 50%;
    background: #6e7c8a;
    filter: blur(0.8px);
`;

const PointerWrap = styled.div`
    position: absolute;
    left: 576px;
    top: 419px;
    display: flex;
`;

const PointerDot = styled.span`
    position: absolute;
    left: 0;
    top: 0;
    width: 9px;
    height: 9px;
    border-radius: 50%;
    background: #a02028;
    filter: blur(0.4px);
`;

const PointerArrow = styled.span`
    margin: 4px 0 0 2px;
    display: flex;
`;

const SmallTool: React.FC<{ icon: React.ReactNode; w?: number; muted?: boolean; caret?: boolean; children: React.ReactNode }> = ({
    icon,
    w = 14,
    muted,
    caret,
    children,
}) => (
    <Tool $muted={muted}>
        <ToolIcon $w={w}>{icon}</ToolIcon>
        {children}
        {caret && <Caret />}
    </Tool>
);

const App: React.FC = () => {
    return (
        <Page>
            <GlobalStyle />
            <Window>
                <TitleBar>
                    <QuickAccess>
                        <AccessLogo />
                        <QuickSep />
                        <SaveIcon />
                        <UndoIcon />
                        <Caret />
                        <UndoIcon $muted />
                        <Caret />
                        <QuickSep />
                        <Caret />
                    </QuickAccess>
                    <RedStrip $w={199} />
                    <ContextTitle>Strumenti tabella</ContextTitle>
                    <WindowTitle>PRIMA NOTA 01 : Database (Access 2007 - 2010)  -  Microsoft Access (Attivazione del prod...</WindowTitle>
                    <WindowControls>
                        <Minus size={10} strokeWidth={3} />
                        <Square size={8} strokeWidth={2} />
                        <CloseBtn>
                            <X size={11} strokeWidth={3} />
                        </CloseBtn>
                    </WindowControls>
                </TitleBar>

                <TabRow>
                    <FileTab>File</FileTab>
                    <RibbonTab $w={43} $active>
                        Home
                    </RibbonTab>
                    <RibbonTab $w={41}>Crea</RibbonTab>
                    <RibbonTab $w={64}>Dati esterni</RibbonTab>
                    <RibbonTab $w={103}>Strumenti database</RibbonTab>
                    <RibbonTab $w={46}>Campi</RibbonTab>
                    <RibbonTab $w={50}>Tabella</RibbonTab>
                    <RightIcons>
                        <ChevronsUp size={10} />
                        <HelpIcon />
                    </RightIcons>
                </TabRow>

                <Ribbon>
                    <Group $w={61}>
                        <GroupBody>
                            <BigButton $w={60}>
                                <BigIcon $h={28}>
                                    <VisualizzaIcon />
                                </BigIcon>
                                Visualizza
                                <CaretLine>
                                    <Caret />
                                </CaretLine>
                            </BigButton>
                        </GroupBody>
                        <GroupLabel>Visualizzazioni</GroupLabel>
                    </Group>

                    <Group $w={117}>
                        <GroupBody>
                            <BigButton $w={38} $muted>
                                <BigIcon $h={28}>
                                    <PasteIcon />
                                </BigIcon>
                                Incolla
                                <CaretLine>
                                    <Caret />
                                </CaretLine>
                            </BigButton>
                            <ToolColumn>
                                <SmallTool icon={<Scissors size={12} color="#555" />}>Taglia</SmallTool>
                                <SmallTool icon={<CopyIcon />}>Copia</SmallTool>
                                <SmallTool icon={<BrushIcon />} muted>
                                    Copia formato
                                </SmallTool>
                            </ToolColumn>
                        </GroupBody>
                        <GroupLabel>
                            Appunti
                            <Launcher />
                        </GroupLabel>
                    </Group>

                    <Group $w={242}>
                        <GroupBody>
                            <BigButton $w={40}>
                                <BigIcon $h={28}>
                                    <FunnelIcon />
                                </BigIcon>
                                Filtro
                            </BigButton>
                            <ToolColumn $w={106}>
                                <SmallTool w={12} icon={<SortIcon $top="A" $bottom="Z" />}>
                                    Crescente
                                </SmallTool>
                                <SmallTool w={12} icon={<SortIcon $top="Z" $bottom="A" />}>
                                    Decrescente
                                </SmallTool>
                                <SmallTool w={12} icon={<SortIcon $top="A" $bottom="Z" $muted />} muted>
                                    Rimuovi ordinamento
                                </SmallTool>
                            </ToolColumn>
                            <ToolColumn>
                                <SmallTool w={12} icon={<SelectionIcon />} caret>
                                    Selezione
                                </SmallTool>
                                <SmallTool w={12} icon={<AdvancedIcon />} caret>
                                    Avanzate
                                </SmallTool>
                                <SmallTool w={12} icon={<FunnelIcon $size={10} />} muted>
                                    Attiva/disattiva filtro
                                </SmallTool>
                            </ToolColumn>
                        </GroupBody>
                        <GroupLabel>Ordina e filtra</GroupLabel>
                    </Group>

                    <Group $w={217}>
                        <GroupBody>
                            <BigButton $w={48} $ml={4}>
                                <BigIcon $h={28}>
                                    <RefreshIcon />
                                </BigIcon>
                                Aggiorna
                                <br />
                                tutto ▾
                            </BigButton>
                            <ToolColumn $w={56}>
                                <SmallTool icon={<NewIcon />}>Nuovo</SmallTool>
                                <SmallTool icon={<SaveRowIcon />}>Salva</SmallTool>
                                <SmallTool icon={<X size={13} color="#333" strokeWidth={2.2} />} caret>
                                    Elimina
                                </SmallTool>
                            </ToolColumn>
                            <ToolColumn>
                                <SmallTool icon={<b>Σ</b>}>Totali</SmallTool>
                                <SmallTool icon={<SpellIcon />}>Controllo ortografia</SmallTool>
                                <SmallTool icon={<MoreIcon />} caret>
                                    Altro
                                </SmallTool>
                            </ToolColumn>
                        </GroupBody>
                        <GroupLabel>Record</GroupLabel>
                    </Group>

                    <Group $w={93}>
                        <GroupBody>
                            <BigButton $w={24}>
                                <BigIcon $h={28}>
                                    <BinocularsIcon />
                                </BigIcon>
                                Trova
                            </BigButton>
                            <ToolColumn $ml={7}>
                                <SmallTool icon={<ReplaceIcon />}>Sostituisci</SmallTool>
                                <SmallTool icon={<GotoIcon />} caret>
                                    Vai a
                                </SmallTool>
                                <SmallTool icon={<PointerIcon />} caret>
                                    Seleziona
                                </SmallTool>
                            </ToolColumn>
                        </GroupBody>
                        <GroupLabel>Trova</GroupLabel>
                    </Group>

                    <Group $w={197}>
                        <GroupBody>
                            <Format>
                                <FirstFormatRow>
                                    <ComboGroup>
                                        <ComboBox $w={105}>
                                            Calibri (Corpo)
                                            <Caret />
                                        </ComboBox>
                                        <ComboBox $w={42}>
                                            11
                                            <Caret />
                                        </ComboBox>
                                    </ComboGroup>
                                    <ListIcon />
                                    <ListIcon $numbered />
                                </FirstFormatRow>
                                <FormatRow>
                                    <StyleLetter>G</StyleLetter>
                                    <StyleLetter $italic>C</StyleLetter>
                                    <StyleLetter $under>S</StyleLetter>
                                    <RibbonSep />
                                    <IndentIcon $out />
                                    <IndentIcon />
                                    <RibbonSep />
                                    <RtlIcon />
                                    <Caret />
                                    <RibbonSep />
                                    <GridIcon $light />
                                    <Caret />
                                </FormatRow>
                                <FormatRow>
                                    <FontColorIcon />
                                    <Caret />
                                    <HighlightIcon />
                                    <Caret />
                                    <FillIcon />
                                    <Caret />
                                    <RibbonSep />
                                    <AlignIcon $mode="left" />
                                    <AlignIcon $mode="center" />
                                    <AlignIcon $mode="right" />
                                    <RibbonSep />
                                    <GridIcon />
                                    <Caret />
                                </FormatRow>
                            </Format>
                        </GroupBody>
                        <GroupLabel>
                            Formattazione testo
                            <Launcher />
                        </GroupLabel>
                    </Group>
                </Ribbon>

                <Body>
                    <NavPane>
                        <NavHeader>
                            <NavTitle>Tutti gli oggetti di Access</NavTitle>
                            <MenuCircle>
                                <Caret />
                            </MenuCircle>
                            <ChevronsLeft size={10} color="#4d5864" />
                        </NavHeader>
                        <SearchRow>
                            <SearchInput>Cerca...</SearchInput>
                            <SearchBtn>
                                <Search size={11} strokeWidth={3} style={{ transform: 'scaleX(-1)' }} />
                            </SearchBtn>
                        </SearchRow>
                        <NavBody>
                            <NavList>
                                <GroupHead>
                                    Tabelle
                                    <ChevronsUp size={10} color="#555" />
                                </GroupHead>
                                {TABLES.map((name) => (
                                    <NavItem key={name} $selected={name === 'Intestazioni'}>
                                        <TableIcon />
                                        {name}
                                    </NavItem>
                                ))}
                                <GroupHead>
                                    Query
                                    <ChevronsUp size={10} color="#555" />
                                </GroupHead>
                                {QUERIES.map((name, index) => (
                                    <NavItem key={name}>
                                        {index === 0 ? <CrossIcon /> : <QueryIcon />}
                                        {name}
                                    </NavItem>
                                ))}
                                <GroupHead>
                                    Maschere
                                    <ChevronsUp size={10} color="#555" />
                                </GroupHead>
                                {FORMS.map((name) => (
                                    <NavItem key={name}>
                                        <FormIcon />
                                        {name}
                                    </NavItem>
                                ))}
                            </NavList>
                            <VScroll>
                                <ScrollBtn>
                                    <ScrollArrow />
                                </ScrollBtn>
                                <VThumb>
                                    <Grip />
                                </VThumb>
                                <ScrollGap />
                                <ScrollBtn>
                                    <ScrollArrow $down />
                                </ScrollBtn>
                            </VScroll>
                        </NavBody>
                    </NavPane>
                    <Splitter />
                    <Doc>
                        <DocTabs>
                            <DocTab>
                                <TableIcon />
                                Intestazioni
                            </DocTab>
                            <DocClose>
                                <X size={9} strokeWidth={3} />
                            </DocClose>
                        </DocTabs>
                        <GridRow $h={15}>
                            <Corner />
                            <HeadCell>
                                Titolo del software
                                <HeadCaret>
                                    <Caret />
                                </HeadCaret>
                            </HeadCell>
                            <HeadCell $active>
                                Denominazione azienda
                                <HeadCaret>
                                    <Caret />
                                </HeadCaret>
                            </HeadCell>
                            <HeadCell>
                                Autore
                                <HeadCaret>
                                    <Caret />
                                </HeadCaret>
                            </HeadCell>
                            <HeadCell>
                                Sito web
                                <HeadCaret>
                                    <Caret />
                                </HeadCaret>
                            </HeadCell>
                            <HeadCell>Mail</HeadCell>
                        </GridRow>
                        <GridRow $h={15}>
                            <RowSelector $current>
                                <PencilIcon />
                            </RowSelector>
                            <Cell $filled>Prima Nota</Cell>
                            <EditCell>
                                <SelectedText>Mia azienda</SelectedText>
                            </EditCell>
                            <Cell $filled>mario rossi</Cell>
                            <Cell $filled $link $pad={2}>
                                www.aziendacliente.it
                            </Cell>
                            <Cell $filled $link $pad={2}>
                                mailmia@gmail.com
                            </Cell>
                        </GridRow>
                        <GridRow $h={16}>
                            <RowSelector>*</RowSelector>
                            <Cell />
                            <Cell />
                            <Cell />
                            <Cell />
                            <Cell />
                        </GridRow>
                        <EmptyGrid>
                            <EmptySelector />
                            <EmptyCol />
                            <EmptyCol />
                            <EmptyCol />
                            <EmptyCol />
                            <EmptyCol />
                        </EmptyGrid>
                        <RecordBar>
                            <RecLabel>Record:</RecLabel>
                            <RecNav $w={24}>
                                <ArrowGlyph $dir="left" $bar />
                                <ArrowGlyph $dir="left" />
                            </RecNav>
                            <RecInput>1 di 1</RecInput>
                            <RecNav $w={42}>
                                <ArrowGlyph $dir="right" />
                                <ArrowGlyph $dir="right" $bar />
                                <ArrowGlyph $dir="right" $bar $color="#b28a2e" />
                            </RecNav>
                            <FilterLabel>
                                <FunnelIcon $size={9} />
                                Nessun filtro
                            </FilterLabel>
                            <SearchBox>Cerca</SearchBox>
                            <HScroll>
                                <HBtn $w={8}>
                                    <ArrowGlyph $dir="left" />
                                </HBtn>
                                <HThumb>
                                    <HGrip />
                                </HThumb>
                                <ScrollGap />
                                <HBtn $w={12}>
                                    <ArrowGlyph $dir="right" />
                                </HBtn>
                            </HScroll>
                        </RecordBar>
                    </Doc>
                </Body>

                <StatusBar>
                    <StatusText>Visualizzazione Foglio dati</StatusText>
                    <ViewIcons>
                        <ViewBtn $active>
                            <ViewIcon $kind={0} />
                        </ViewBtn>
                        <ViewBtn>
                            <ViewIcon $kind={1} />
                        </ViewBtn>
                        <ViewBtn>
                            <ViewIcon $kind={2} />
                        </ViewBtn>
                        <ViewBtn>
                            <ViewIcon $kind={3} />
                        </ViewBtn>
                    </ViewIcons>
                </StatusBar>
                <BottomEdge />
            </Window>
            <ClickDot />
            <PointerWrap>
                <PointerDot />
                <PointerArrow>
                    <MouseCursor />
                </PointerArrow>
            </PointerWrap>
        </Page>
    );
};

export default App;
